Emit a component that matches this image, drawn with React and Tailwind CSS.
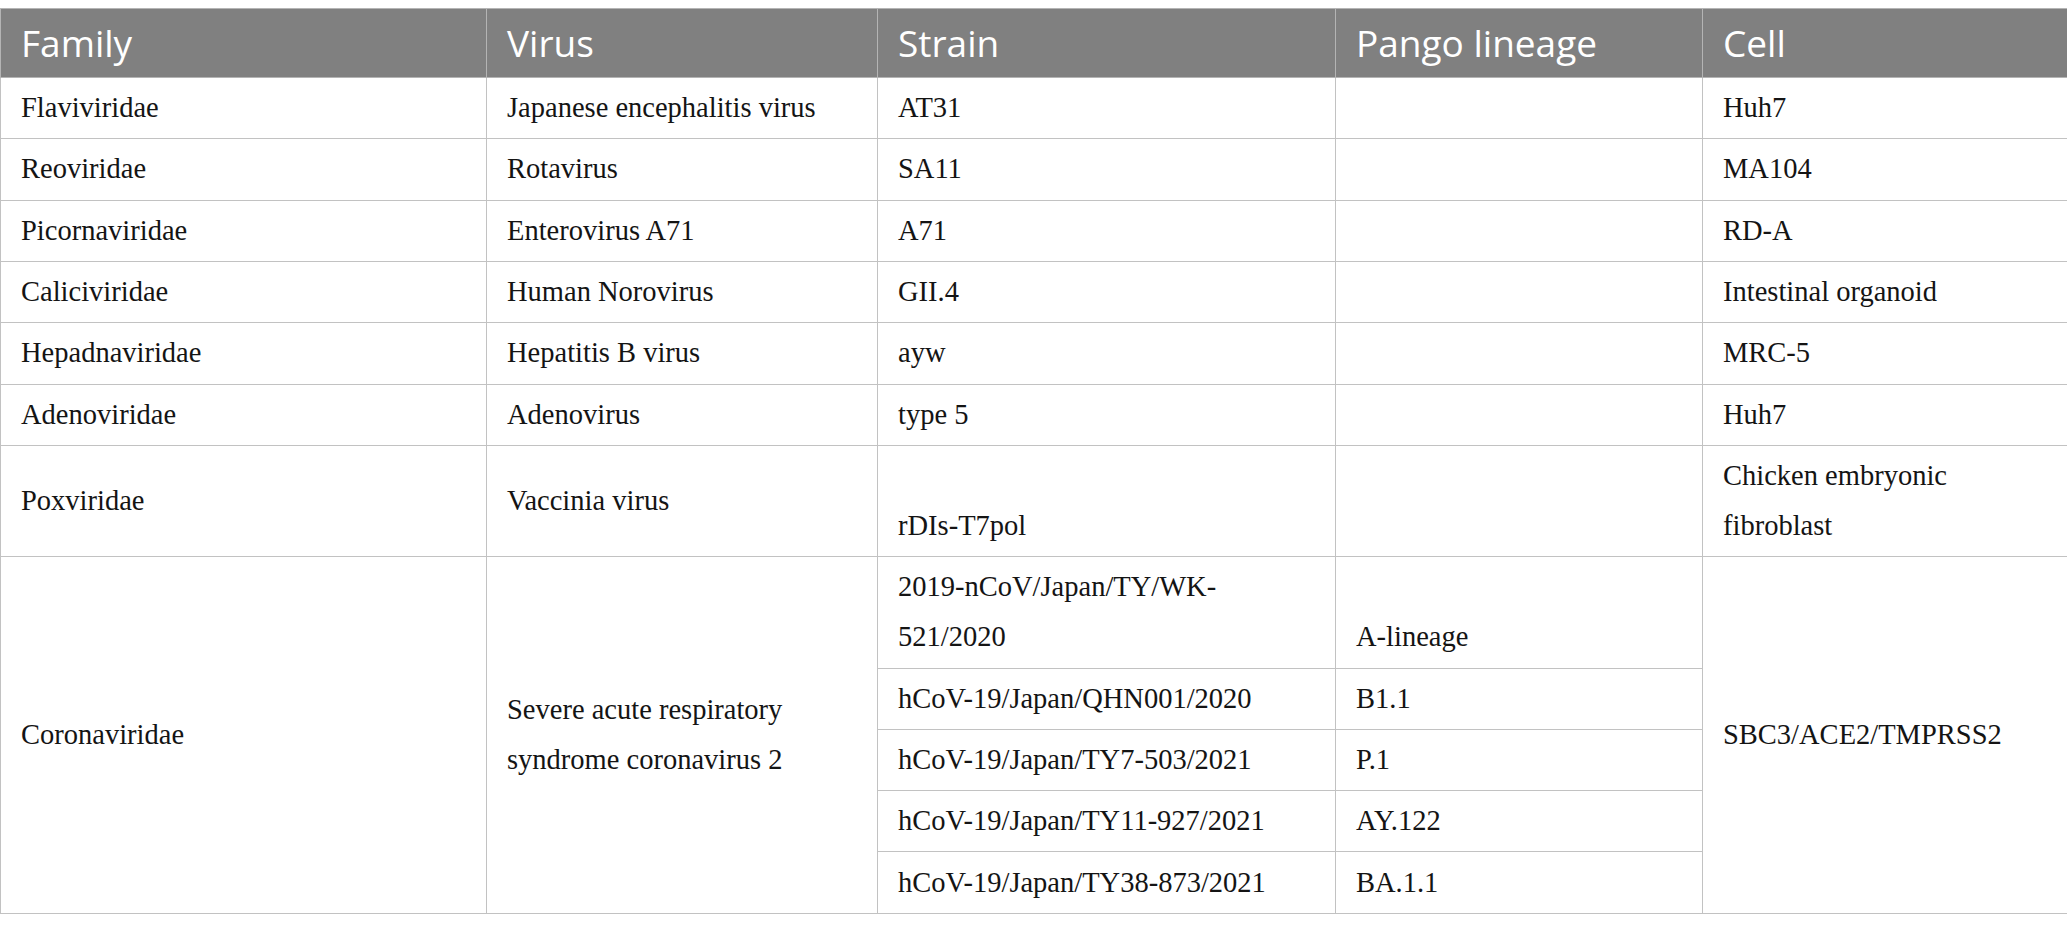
const head = ["Family", "Virus", "Strain", "Pango lineage", "Cell"];

const simpleRows = [
  ["Flaviviridae", "Japanese encephalitis virus", "AT31", "", "Huh7"],
  ["Reoviridae", "Rotavirus", "SA11", "", "MA104"],
  ["Picornaviridae", "Enterovirus A71", "A71", "", "RD-A"],
  ["Caliciviridae", "Human Norovirus", "GII.4", "", "Intestinal organoid"],
  ["Hepadnaviridae", "Hepatitis B virus", "ayw", "", "MRC-5"],
  ["Adenoviridae", "Adenovirus", "type 5", "", "Huh7"],
];

const sarsStrains = [
  ["hCoV-19/Japan/QHN001/2020", "B1.1"],
  ["hCoV-19/Japan/TY7-503/2021", "P.1"],
  ["hCoV-19/Japan/TY11-927/2021", "AY.122"],
  ["hCoV-19/Japan/TY38-873/2021", "BA.1.1"],
];

const td = "border border-[#c2c2c2] px-[20px] py-[5.17px] leading-[50px] align-middle";
const tdBottom = "border border-[#c2c2c2] px-[20px] py-[5.17px] leading-[50px] align-bottom";

export default function App() {
  return (
    <div className="w-[2067px] h-[929px] bg-white pt-[8px] overflow-hidden">
      <table
        className="w-full table-fixed border-collapse text-[28.5px] text-[#141414]"
        style={{ fontFamily: '"Liberation Serif", "Times New Roman", serif' }}
      >
        <colgroup>
          <col className="w-[486px]" />
          <col className="w-[391px]" />
          <col className="w-[458px]" />
          <col className="w-[367px]" />
          <col className="w-[365px]" />
        </colgroup>
        <thead>
          <tr className="bg-[#808080]">
            {head.map(h => (
              <th
                key={h}
                className="border border-[#b4b4b4] px-[20px] py-[9px] text-left font-normal text-white text-[37px] leading-[50px] align-middle"
                style={{ fontFamily: '"Open Sans", "Noto Sans", sans-serif' }}
              >
                {h}
              </th>
            ))}
          </tr>
        </thead>
        <tbody>
          {simpleRows.map(r => (
            <tr key={r[0]}>
              <td className={td}>{r[0]}</td>
              <td className={td}>{r[1]}</td>
              <td className={tdBottom}>{r[2]}</td>
              <td className={tdBottom}>{r[3]}</td>
              <td className={td}>{r[4]}</td>
            </tr>
          ))}

          {/* Poxviridae */}
          <tr>
            <td className={td}>Poxviridae</td>
            <td className={td}>Vaccinia virus</td>
            <td className={tdBottom}>rDIs-T7pol</td>
            <td className={tdBottom}></td>
            <td className={td}>Chicken embryonic<br />fibroblast</td>
          </tr>

          {/* Coronaviridae */}
          <tr>
            <td className={td} rowSpan={5}>Coronaviridae</td>
            <td className={td} rowSpan={5}>Severe acute respiratory<br />syndrome coronavirus 2</td>
            <td className={tdBottom}>2019-nCoV/Japan/TY/WK-<br />521/2020</td>
            <td className={tdBottom}>A-lineage</td>
            <td className={td} rowSpan={5}>SBC3/ACE2/TMPRSS2</td>
          </tr>
          {sarsStrains.map(([s, p]) => (
            <tr key={s}>
              <td className={tdBottom}>{s}</td>
              <td className={tdBottom}>{p}</td>
            </tr>
          ))}
        </tbody>
      </table>
    </div>
  );
}
